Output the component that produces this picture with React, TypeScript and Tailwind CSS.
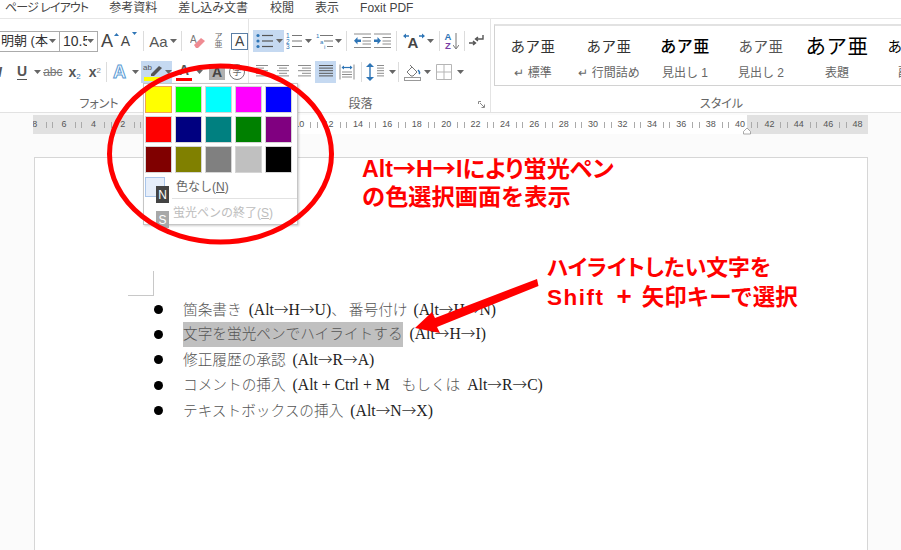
import type { ReactNode } from "react";

const SANS = "font-['Liberation_Sans','Noto_Sans_CJK_JP',sans-serif]";

const tabs = [
  { label: "ページ レイアウト", cls: "ml-[5px] tracking-[-0.9px]" },
  { label: "参考資料", cls: "ml-[21px]" },
  { label: "差し込み文書", cls: "ml-[21px]" },
  { label: "校閲", cls: "ml-[22px]" },
  { label: "表示", cls: "ml-[21px]" },
  { label: "Foxit PDF", cls: "ml-[21px]" }
];

const swatches = [
  "bg-[#ffff00]", "bg-[#00ff00]", "bg-[#00ffff]", "bg-[#ff00ff]", "bg-[#0000ff]",
  "bg-[#ff0000]", "bg-[#000080]", "bg-[#008080]", "bg-[#008000]", "bg-[#800080]",
  "bg-[#800000]", "bg-[#808000]", "bg-[#808080]", "bg-[#c0c0c0]", "bg-[#000000]"
];

const styles = [
  { sample: "あア亜", label: "↵ 標準", cls: "text-[14.5px] text-[#333]", w: "w-[76px]" },
  { sample: "あア亜", label: "↵ 行間詰め", cls: "text-[14.5px] text-[#333]", w: "w-[76px]" },
  { sample: "あア亜", label: "見出し 1", cls: "text-[16px] font-medium text-black", w: "w-[76px]" },
  { sample: "あア亜", label: "見出し 2", cls: "text-[14.5px] text-[#555]", w: "w-[76px]" },
  { sample: "あア亜", label: "表題", cls: "text-[20.5px] text-black", w: "w-[76px]" },
  { sample: "あア亜", label: "副題", cls: "text-[14.5px] text-black", w: "w-[70px]" }
];

const rulerNums = [8, 6, 4, 2, 0, 2, 4, 6, 8, 10, 12, 14, 16, 18, 20, 22, 24, 26, 28, 30, 32, 34, 36, 38, 40, 42, 44, 46, 48];

function Caret({ cls = "" }: { cls?: string }) {
  return (
    <svg width="7" height="4" viewBox="0 0 7 4" className={`shrink-0 ${cls}`}>
      <path d="M0 0h7L3.5 4z" fill="#666" />
    </svg>
  );
}

function Sep({ cls = "" }: { cls?: string }) {
  return <div className={`h-[20px] w-px shrink-0 bg-[#dcdcdc] ${cls}`} />;
}

// paragraph alignment glyph, lengths are [x1, x2] per line
function AlignIcon({ lines, cls = "", stroke = "#8c8c8c" }: { lines: number[][]; cls?: string; stroke?: string }) {
  return (
    <svg width="16" height="16" viewBox="0 0 16 16" className={`shrink-0 ${cls}`}>
      {lines.map((l, i) => (
        <path key={i} d={`M${l[0]} ${1.5 + i * 2.6}H${l[1]}`} stroke={stroke} strokeWidth="1" />
      ))}
    </svg>
  );
}

function Bullets({ cls = "" }: { cls?: string }) {
  return (
    <svg width="17" height="16" viewBox="0 0 17 16" className={`shrink-0 ${cls}`}>
      {[2.5, 8, 13.5].map((y) => (
        <g key={y}>
          <circle cx="2" cy={y} r="1.6" fill="#2e75b6" />
          <path d={`M6 ${y}H17`} stroke="#555" strokeWidth="1.2" />
        </g>
      ))}
    </svg>
  );
}

function Numbered({ cls = "" }: { cls?: string }) {
  return (
    <svg width="16" height="16" viewBox="0 0 16 16" className={`shrink-0 ${cls}`}>
      {[5, 10.5, 16].map((y, i) => (
        <g key={y}>
          <text x="0" y={y} fontSize="6.5" fill="#2e75b6" fontFamily="Liberation Sans">{i + 1}</text>
          <path d={`M6 ${y - 2.5}H16`} stroke="#777" strokeWidth="1" />
        </g>
      ))}
    </svg>
  );
}

function MultiLevel({ cls = "" }: { cls?: string }) {
  return (
    <svg width="17" height="16" viewBox="0 0 17 16" className={`shrink-0 ${cls}`}>
      <text x="0" y="5" fontSize="6" fill="#2e75b6" fontFamily="Liberation Sans">1</text>
      <path d="M4 2.5H17" stroke="#777" strokeWidth="1" />
      <text x="4" y="10.5" fontSize="6" fill="#2e75b6" fontFamily="Liberation Sans">a</text>
      <path d="M8 8H17" stroke="#777" strokeWidth="1" />
      <text x="8" y="16" fontSize="6" fill="#2e75b6" fontFamily="Liberation Sans">i</text>
      <path d="M11 13.5H17" stroke="#777" strokeWidth="1" />
    </svg>
  );
}

function Indent({ flip = false, cls = "" }: { flip?: boolean; cls?: string }) {
  return (
    <svg width="17" height="16" viewBox="0 0 17 16" className={`shrink-0 ${cls}`}>
      {[1, 14.5].map((y) => (
        <path key={y} d={`M0 ${y}H17`} stroke="#8c8c8c" strokeWidth="1" />
      ))}
      {[4.5, 8, 11].map((y) => (
        <path key={y} d={`M8.5 ${y}H17`} stroke="#8c8c8c" strokeWidth="1" />
      ))}
      {flip ? (
        <path d="M0 6.5h3.5V4l3.5 3.8-3.5 3.8V9H0z" fill="#2e75b6" />
      ) : (
        <path d="M7 6.5H3.5V4L0 7.8l3.5 3.8V9H7z" fill="#2e75b6" />
      )}
    </svg>
  );
}

function RibbonRow({ children, cls = "" }: { children: ReactNode; cls?: string }) {
  return <div className={`flex h-[22px] items-center whitespace-nowrap ${cls}`}>{children}</div>;
}

function FontGroup() {
  return (
    <div className="flex w-[249px] shrink-0 flex-col border-r border-[#e4e4e4] pt-[11px]">
      <RibbonRow>
        <div className="flex h-[21px] w-[60px] shrink-0 items-center justify-between overflow-hidden border border-l-0 border-[#ababab] pl-px pr-[3px] text-[13px] text-[#333]">
          <span>明朝 (本</span>
          <Caret />
        </div>
        <div className="-ml-px flex h-[21px] w-[39px] shrink-0 items-center justify-between overflow-hidden border border-[#ababab] pl-[3px] pr-[3px] text-[14px] text-[#333]">
          <span className="w-[24px] overflow-hidden">10.5</span>
          <Caret />
        </div>
        <div className="relative ml-[3px] w-[16px] text-[18px] leading-none text-[#444]">
          A
          <svg width="5" height="3" viewBox="0 0 5 3" className="absolute right-[-2px] top-[1px]"><path d="M0 3L2.5 0 5 3z" fill="#2e75b6" /></svg>
        </div>
        <div className="relative ml-[3px] w-[16px] pl-px text-[14px] leading-none text-[#444]">
          A
          <svg width="5" height="3" viewBox="0 0 5 3" className="absolute right-[-2px] top-[-2px]"><path d="M0 0h5L2.5 3z" fill="#2e75b6" /></svg>
        </div>
        <Sep cls="ml-[8px]" />
        <span className="ml-[5px] text-[15px] leading-none text-[#555]">Aa</span>
        <Caret cls="ml-[2px]" />
        <Sep cls="ml-[4px]" />
        <svg width="16" height="16" viewBox="0 0 16 16" className="ml-[8px] shrink-0">
          <text x="0" y="10" fontSize="10" fill="#777" fontFamily="Liberation Sans">A</text>
          <path d="M4 12l7-7 4 3-7 7H6z" fill="#ef8b92" />
        </svg>
        <div className="ml-[6px] flex w-[14px] flex-col items-center text-[8px] leading-[8px] text-[#666]">
          <span>ア</span>
          <span>亜</span>
        </div>
        <div className="ml-[6px] flex h-[17px] w-[17px] items-center justify-center border border-[#5b7fa6] text-[14px] leading-none text-[#444]">A</div>
      </RibbonRow>
      <RibbonRow cls="mt-[9px]">
        <span className="ml-[-2px] w-[6px] overflow-hidden text-[14px] font-bold italic leading-none text-[#555]">I</span>
        <span className="ml-[13px] border-b border-[#555] text-[14px] font-bold leading-[15px] text-[#555]">U</span>
        <Caret cls="ml-[7px]" />
        <span className="ml-[2px] text-[12px] leading-none text-[#777] line-through">abc</span>
        <span className="ml-[6px] text-[14px] font-bold leading-none text-[#555]">x<sub className="text-[8px] font-normal text-[#2e75b6]">2</sub></span>
        <span className="ml-[8px] text-[14px] font-bold leading-none text-[#555]">x<sup className="text-[8px] font-normal text-[#888]">2</sup></span>
        <Sep cls="ml-[5px]" />
        <span className="ml-[6px] w-[16px] text-[18px] font-bold leading-none text-white [-webkit-text-stroke:1px_#5b9bd5]">A</span>
        <Caret cls="ml-[3px]" />
        <div className="ml-[2px] flex h-[22px] w-[31px] shrink-0 items-center bg-[#c5d9f1] pl-[2px]">
          <svg width="20" height="20" viewBox="0 0 20 20" className="shrink-0">
            <text x="0" y="8" fontSize="8" fill="#555" fontFamily="Liberation Sans">ab</text>
            <path d="M8 12l8-8 3 2-8 8H8z" fill="#555" />
            <rect x="1" y="15" width="16" height="4" fill="#ffff00" />
          </svg>
          <Caret cls="ml-[2px]" />
        </div>
        <div className="ml-[4px] flex w-[16px] flex-col items-center">
          <span className="text-[14px] font-bold leading-[14px] text-[#555]">A</span>
          <span className="mt-px h-[3px] w-[16px] bg-[#ff0000]" />
        </div>
        <Caret cls="ml-[4px]" />
        <div className="ml-[6px] flex h-[15px] w-[16px] items-center justify-center bg-[#b0b0b0] text-[14px] font-bold leading-none text-[#444]">A</div>
        <div className="ml-[4px] flex h-[16px] w-[16px] items-center justify-center rounded-full border border-[#777] text-[9px] leading-none text-[#666]">字</div>
      </RibbonRow>
      <div className="mt-[13px] flex h-[16px] items-center justify-center pr-[50px] text-[12px] text-[#666] [font-feature-settings:'palt']">フォント</div>
    </div>
  );
}

function ParagraphGroup() {
  return (
    <div className="relative flex w-[242px] shrink-0 flex-col border-r border-[#e4e4e4] pt-[11px]">
      <RibbonRow cls="pl-[4px]">
        <div className="flex h-[22px] w-[31px] shrink-0 items-center bg-[#c5d9f1] pl-[3px]">
          <Bullets />
          <Caret cls="ml-[3px]" />
        </div>
        <Numbered cls="ml-[2px]" />
        <Caret cls="ml-[3px]" />
        <MultiLevel cls="ml-[4px]" />
        <Caret cls="ml-[2px]" />
        <Sep cls="ml-[4px]" />
        <Indent cls="ml-[7px]" />
        <Indent flip cls="ml-[3px]" />
        <Sep cls="ml-[5px]" />
        <svg width="22" height="16" viewBox="0 0 22 16" className="ml-[6px] shrink-0">
          <path d="M1 3h5M16 3h5" stroke="#2e75b6" strokeWidth="1.6" />
          <path d="M0 3l3-2.500v5zM22 3l-3-2.500v5z" fill="#2e75b6" />
          <text x="4.500" y="15" fontSize="15" fontWeight="bold" fill="#444" fontFamily="Liberation Sans">A</text>
        </svg>
        <Caret cls="ml-[2px]" />
        <Sep cls="ml-[5px]" />
        <div className="ml-[3px] flex w-[10px] flex-col items-center text-[9.5px] font-bold leading-[9.5px]">
          <span className="text-[#2e75b6]">A</span>
          <span className="text-[#7a3fa5]">Z</span>
        </div>
        <svg width="6" height="17" viewBox="0 0 6 17" className="shrink-0">
          <path d="M3 0V15M0 12l3 4 3-4" stroke="#777" strokeWidth="1" fill="none" />
        </svg>
        <Sep cls="ml-[5px]" />
        <svg width="15" height="14" viewBox="0 0 15 14" className="ml-[4px] shrink-0">
          <path d="M14 1v4H7M9 3L6.500 5 9 7" stroke="#555" strokeWidth="1.4" fill="none" />
          <path d="M0 9h6M4 7l2.500 2L4 11" stroke="#555" strokeWidth="1.4" fill="none" />
        </svg>
      </RibbonRow>
      <RibbonRow cls="mt-[9px] pl-[6px]">
        <AlignIcon lines={[[1, 13], [1, 9], [1, 13], [1, 9], [1, 13]]} />
        <AlignIcon cls="ml-[5px]" lines={[[1, 13], [3, 11], [1, 13], [3, 11], [1, 13]]} />
        <AlignIcon cls="ml-[5px]" lines={[[1, 14], [5, 14], [1, 14], [5, 14], [1, 14]]} />
        <div className="ml-[2px] flex h-[22px] w-[21px] shrink-0 items-center justify-center bg-[#c5d9f1]">
          <AlignIcon stroke="#555" lines={[[1, 15], [1, 15], [1, 15], [1, 15], [1, 15]]} />
        </div>
        <svg width="16" height="16" viewBox="0 0 16 16" className="ml-[3px] shrink-0">
          <path d="M1 .5V15.500M15 .5V15.500" stroke="#8c8c8c" />
          <path d="M3 3.500h10" stroke="#2e75b6" strokeWidth="1.2" />
          <path d="M2.500 3.500L5 1.500v4zM13.500 3.500L11 1.500v4z" fill="#2e75b6" />
          <path d="M3 8h10M3 10.500h10M3 13h10" stroke="#8c8c8c" />
        </svg>
        <Sep cls="ml-[6px]" />
        <svg width="10" height="18" viewBox="0 0 10 18" className="ml-[3px] shrink-0">
          <path d="M5 1v16" stroke="#2e75b6" strokeWidth="1.4" />
          <path d="M5 0L1 4h8zM5 18l-4-4h8z" fill="#2e75b6" />
        </svg>
        <AlignIcon lines={[[2, 9], [2, 9], [2, 9], [2, 9], [2, 9]]} />
        <Caret cls="-ml-[2px]" />
        <Sep cls="ml-[2px]" />
        <svg width="17" height="17" viewBox="0 0 17 17" className="ml-[5px] shrink-0">
          <path d="M3 8l5-5 5 5-4 4H7z" fill="#fff" stroke="#777" />
          <path d="M6 1l3 3" stroke="#777" />
          <path d="M14 6c2 2 2 3 1 4" stroke="#2e75b6" strokeWidth="1.4" fill="none" />
          <rect x="0.5" y="13.500" width="16" height="3" fill="#fff" stroke="#999" />
        </svg>
        <Caret cls="ml-[3px]" />
        <svg width="16" height="16" viewBox="0 0 16 16" className="ml-[5px] shrink-0">
          <path d="M.5.5h15v15H.5zM8 .5v15M.5 8h15" stroke="#b5b5b5" fill="none" />
        </svg>
        <Caret cls="ml-[5px]" />
      </RibbonRow>
      <div className="mt-[13px] flex h-[16px] items-center justify-center pr-[18px] text-[12px] text-[#666]">段落</div>
      <svg width="7" height="7" viewBox="0 0 7 7" className="absolute bottom-[4px] right-[5px]">
        <path d="M.5 3V.5H3M2 2l4 4M6.500 3.500v3h-3" stroke="#888" fill="none" />
      </svg>
    </div>
  );
}

function StylesGroup() {
  return (
    <div className="flex min-w-0 flex-1 flex-col pl-[3px] pt-[5px]">
      <div className="flex h-[62px] overflow-hidden border border-r-0 border-t-2 border-[#d2d2d2] border-t-[#e2e2e2]">
        {styles.map((s) => (
          <div key={s.label} className={`flex shrink-0 flex-col items-center whitespace-nowrap pt-[6px] ${s.w}`}>
            <div className={`flex h-[30px] items-center leading-none tracking-[0.5px] ${s.cls}`}>{s.sample}</div>
            <div className="mt-[3px] text-[12px] leading-[16px] text-[#666]">{s.label}</div>
          </div>
        ))}
      </div>
      <div className="mt-[10px] flex h-[16px] items-center justify-center pl-[48px] text-[12px] text-[#666] [font-feature-settings:'palt']">スタイル</div>
    </div>
  );
}

function Ruler() {
  return (
    <div className="ml-[33px] mt-[2px] flex h-[19px] w-[835px] items-center overflow-hidden bg-[linear-gradient(90deg,#e1e1e1_120px,#ffffff_120px,#ffffff_714px,#e1e1e1_714px)] text-[9px] text-[#555]">
      <div className="flex shrink-0 -ml-[13px]">
        {rulerNums.map((n, i) => (
          <div key={i} className="flex w-[29.4px] shrink-0 items-center justify-center gap-[5px] leading-none">
            <span className="h-[6px] w-px bg-[#aaa]" />
            <span className="w-[12px] text-center">{n === 0 ? "" : n}</span>
            <span className="h-[6px] w-px bg-[#aaa]" />
          </div>
        ))}
      </div>
    </div>
  );
}

function Arrow() {
  return <span className="font-['Noto_Sans_CJK_JP',sans-serif] text-[14.67px] text-[#333]">→</span>;
}

// latin shortcut text, set a bit larger and darker than the kana around it
function Keys({ text, cls = "ml-[7px]" }: { text: string; cls?: string }) {
  const parts = text.split("→");
  return (
    <span className={`text-[15.7px] text-[#222] ${cls}`}>
      {parts.map((p, i) => (
        <span key={i}>
          {i > 0 && <Arrow />}
          {p}
        </span>
      ))}
    </span>
  );
}

function DocLine({ children }: { children: ReactNode }) {
  return (
    <li className="flex h-[25.2px] items-center">
      <span className="ml-[119px] h-[9px] w-[9px] shrink-0 rounded-full bg-black" />
      <span className="ml-[20px] whitespace-nowrap">{children}</span>
    </li>
  );
}

function Page() {
  return (
    <div className="ml-[34px] mt-[23px] h-[393px] w-[834px] border border-b-0 border-[#d6d6d6] bg-white">
      <div className="ml-[93px] mt-[113px] h-[25px] w-[26px] border-b border-r border-[#c8c8c8]" />
      <ul className="mt-px font-['Liberation_Serif','Noto_Sans_CJK_JP',serif] text-[14.67px] font-light text-[#555]">
        <DocLine>
          箇条書き<Keys text="(Alt→H→U)" />、<span className="ml-[3px]">番号付け</span><Keys text="(Alt→H→N)" cls="ml-[6px]" />
        </DocLine>
        <DocLine>
          <span className="inline-block h-[25px] bg-[#c0c0c0] leading-[25px]">文字を蛍光ペンでハイライトする</span>
          <Keys text="(Alt→H→I)" />
        </DocLine>
        <DocLine>修正履歴の承認<Keys text="(Alt→R→A)" /></DocLine>
        <DocLine>コメントの挿入<Keys text="(Alt + Ctrl + M" /><span className="ml-[12px]">もしくは</span><Keys text="Alt→R→C)" /></DocLine>
        <DocLine>テキストボックスの挿入<Keys text="(Alt→N→X)" /></DocLine>
      </ul>
    </div>
  );
}

function HighlightMenu() {
  return (
    <div className="absolute left-[143px] top-[83px] h-[142px] w-[155px] border border-[#c6c6c6] bg-white pl-px pt-[2px] shadow-[1px_1px_2px_rgba(0,0,0,0.2)]">
      <div className="grid grid-cols-[repeat(5,27px)] gap-[3px]">
        {swatches.map((c, i) => (
          <div key={c} className={`h-[27px] border ${i === 0 ? "border-[#f2a74e]" : "border-[#d5d5d5]"} ${c}`} />
        ))}
      </div>
      <div className="relative mt-[3px] flex h-[21px] items-center">
        <div className="h-[20px] w-[20px] border border-[#a9c5ea] bg-[#e6eefa]" />
        <span className="ml-[11px] text-[12px] text-[#666]">色なし(<span className="underline">N</span>)</span>
        <div className="absolute left-[11px] top-[10px] flex h-[17px] w-[13px] items-center justify-center bg-[#444] text-[12px] text-white">N</div>
      </div>
      <div className="ml-[27px] mt-px h-px bg-[#e2e2e2]" />
      <div className="relative mt-[6px] pl-[28px] text-[12px] leading-[16px] text-[#bdbdbd]">
        蛍光ペンの終了(<span className="underline">S</span>)
        <div className="absolute left-[11px] top-[6px] flex h-[17px] w-[13px] items-center justify-center bg-[#a8a8a8] text-[12px] text-white">S</div>
      </div>
    </div>
  );
}

function RedArrow() {
  return <span className="font-['Noto_Sans_CJK_JP',sans-serif] [font-feature-settings:normal]">→</span>;
}

export default function App() {
  return (
    <div className={`relative h-[550px] w-[901px] overflow-hidden bg-[#fbfbfb] ${SANS}`}>
      <div className="flex h-[19px] items-center border-b border-[#e6e6e6] bg-white pb-[3px] text-[12px] leading-none text-[#444] [font-feature-settings:'palt']">
        {tabs.map((t) => (
          <span key={t.label} className={`whitespace-nowrap ${t.cls}`}>{t.label}</span>
        ))}
      </div>
      <div className="flex h-[94px] overflow-hidden border-b border-[#e2e2e2] bg-white">
        <FontGroup />
        <ParagraphGroup />
        <StylesGroup />
      </div>
      <Ruler />
      <Page />

      <HighlightMenu />

      {/* hand-drawn annotations over the screenshot */}
      <svg width="901" height="550" viewBox="0 0 901 550" className="pointer-events-none absolute left-0 top-0">
        <ellipse cx="220.500" cy="154" rx="111" ry="88" fill="none" stroke="#ff0000" strokeWidth="5" />
        <path d="M537 279L538.500 286 437 327 440 333 415 328 432 312 435 318z" fill="#ff0000" />
        <path d="M747 128l3.500 3.500v2.500h-7v-2.500z" fill="#fff" stroke="#888" strokeWidth="0.7" />
      </svg>
      <div className="absolute left-[362px] top-[153px] text-[23.2px] font-bold leading-[28px] text-[#ff0000]">
        <p className="whitespace-nowrap [font-feature-settings:'palt']">Alt<RedArrow />H<RedArrow />Iにより蛍光ペン</p>
        <p className="whitespace-nowrap">の色選択画面を表示</p>
      </div>
      <div className="absolute left-[547px] top-[254px] text-[22.500px] font-bold leading-[28px] text-[#ff0000]">
        <p className="whitespace-nowrap text-[21.8px] [font-feature-settings:'palt']">ハイライトしたい文字を</p>
        <p className="whitespace-nowrap">
          <span className="tracking-[1.500px]">Shift</span>
          <span className="ml-[12px] mr-[10px] text-[26px]">+</span>
          矢印キーで選択
        </p>
      </div>
    </div>
  );
}
